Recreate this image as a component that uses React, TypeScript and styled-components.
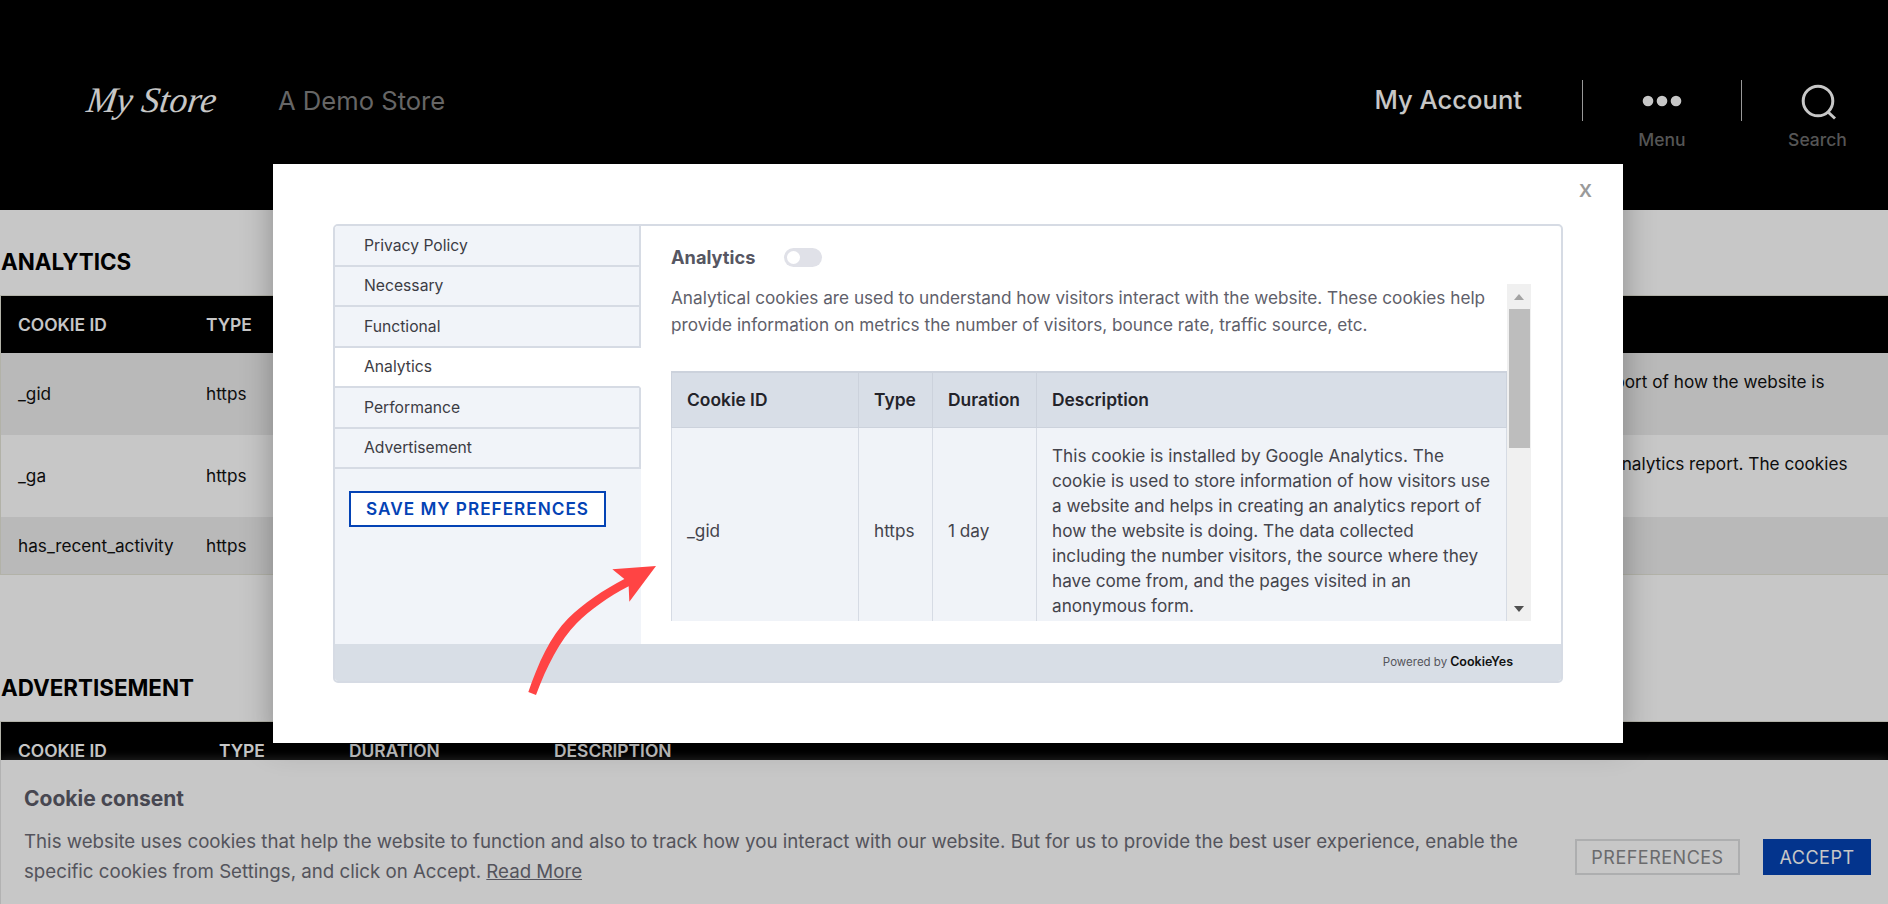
import React from "react";
import styled, { createGlobalStyle } from "styled-components";

const Global = createGlobalStyle`
  html, body { margin: 0; padding: 0; background: #fff; overflow: hidden; }
  body { font-family: Inter, "Liberation Sans", sans-serif; }
  * { box-sizing: border-box; }
`;

const Page = styled.div`
  position: relative;
  width: 1888px;
  height: 904px;
  overflow: hidden;
  background: #fff;
`;

const SiteHeader = styled.header`
  height: 210px;
  background: #000;
  display: flex;
  justify-content: space-between;
  align-items: flex-start;
  padding: 80px 0 0 87px;
`;
const Brand = styled.div`
  display: flex;
  align-items: center;
  height: 41px;
`;
const Logo = styled.div`
  width: 191px;
  font-family: "Liberation Serif", serif;
  font-style: italic;
  font-size: 36px;
  line-height: 41px;
  color: #fff;
  transform: skewX(-8deg);
  transform-origin: left center;
`;
const Tagline = styled.div`
  font-size: 25.6px;
  line-height: 41px;
  color: #838383;
`;
const HeaderRight = styled.div`
  display: flex;
  align-items: flex-start;
`;
const Account = styled.div`
  font-size: 25.6px;
  font-weight: 500;
  line-height: 39px;
  color: #fff;
  margin-right: 60px;
`;
const Separator = styled.div`
  width: 1px;
  height: 41px;
  background: #c4c4c4;
`;
const HeaderAction = styled.div<{ $w: number; $pl?: number }>`
  width: ${(p) => p.$w}px;
  padding-left: ${(p) => p.$pl ?? 0}px;
  display: flex;
  flex-direction: column;
  align-items: center;
`;
const ActionIcon = styled.div`
  height: 41px;
  display: flex;
  align-items: center;
  justify-content: center;
  color: #fff;
`;
const ActionLabel = styled.div`
  margin-top: 9px;
  font-size: 17.5px;
  font-weight: 500;
  line-height: 20px;
  color: #6d6d6d;
`;

const Main = styled.main`
  padding-top: 37px;
`;
const SectionTitle = styled.h2`
  margin: 0 0 18px 1px;
  font-size: 22.4px;
  line-height: 30px;
  font-weight: 700;
  color: #000;
`;
const CookieTable = styled.table<{ $mb?: number }>`
  width: 1888px;
  table-layout: fixed;
  border-collapse: separate;
  border-spacing: 0;
  border: 1px solid #e4e4d8;
  border-right: 0;
  margin-bottom: ${(p) => p.$mb ?? 0}px;
  font-size: 17.2px;
  color: #000;
`;
const HeadCell = styled.th`
  height: 57px;
  padding: 0 0 0 17px;
  background: #000;
  color: #fff;
  font-size: 17.4px;
  font-weight: 600;
  text-align: left;
  text-transform: uppercase;
`;
const Row = styled.tr<{ $odd?: boolean; $h: number }>`
  height: ${(p) => p.$h}px;
  background: ${(p) => (p.$odd ? "#eee" : "#fff")};
`;
const Cell = styled.td`
  padding: 0 17px;
  line-height: 24px;
  vertical-align: middle;
  color: #111;
`;

const Banner = styled.aside`
  position: absolute;
  left: 0;
  right: 0;
  top: 760px;
  height: 144px;
  background: #fff;
  border-left: 1px solid #e4e4e4;
  box-shadow: 0 -1px 10px 0 rgba(172, 171, 171, 0.3);
  display: flex;
  justify-content: space-between;
  padding: 25px 17px 0 23px;
`;
const BannerTitle = styled.div`
  font-size: 21px;
  line-height: 28px;
  font-weight: 700;
  color: #5c5c68;
`;
const BannerCopy = styled.div`
  width: 1510px;
  margin-top: 14px;
  font-size: 18.7px;
  line-height: 30px;
  color: #6c6c76;
`;
const ReadMore = styled.span`
  text-decoration: underline;
`;
const BannerButtons = styled.div`
  display: flex;
  gap: 23px;
  margin-top: 54px;
  align-items: flex-start;
`;
const BannerButton = styled.div<{ $primary?: boolean }>`
  height: 36px;
  width: ${(p) => (p.$primary ? 108 : 165)}px;
  display: flex;
  align-items: center;
  justify-content: center;
  font-size: 18px;
  letter-spacing: 0.5px;
  background: ${(p) => (p.$primary ? "#0443b5" : "transparent")};
  color: ${(p) => (p.$primary ? "#fff" : "#898a8c")};
  border: 2px solid ${(p) => (p.$primary ? "#0443b5" : "#dedfe0")};
`;

const Dim = styled.div`
  position: absolute;
  inset: 0;
  background: rgba(0, 0, 0, 0.22);
`;

const Modal = styled.div`
  position: absolute;
  left: 273px;
  top: 164px;
  width: 1350px;
  height: 579px;
  padding: 60px;
  background: #fff;
  box-shadow: 0 0 30px rgba(0, 0, 0, 0.3);
`;
const Close = styled.div`
  position: absolute;
  right: 31px;
  top: 10px;
  font-size: 24px;
  line-height: 30px;
  font-weight: 500;
  color: #9a9a9a;
`;
const Panel = styled.div`
  height: 459px;
  border: 2px solid #d6dbe4;
  border-radius: 5px;
  overflow: hidden;
  display: flex;
  flex-direction: column;
`;
const PanelBody = styled.div`
  flex: 1;
  display: flex;
  min-height: 0;
`;
const Sidebar = styled.nav`
  width: 306px;
  background: #f1f4f9;
  flex: none;
`;
const Tab = styled.div<{ $active?: boolean }>`
  height: 40.5px;
  display: flex;
  align-items: center;
  padding-left: 29px;
  font-size: 15.7px;
  color: #3c3c44;
  background: ${(p) => (p.$active ? "#fff" : "transparent")};
  border-bottom: 2px solid #d6dbe4;
  border-right: 2px solid ${(p) => (p.$active ? "#fff" : "#d6dbe4")};
`;
const SaveButton = styled.div`
  margin: 22px 0 0 14px;
  width: 257px;
  height: 36px;
  display: flex;
  align-items: center;
  justify-content: center;
  padding-bottom: 1px;
  background: #fff;
  border: 2px solid #0443b5;
  color: #0443b5;
  font-size: 17.2px;
  font-weight: 600;
  letter-spacing: 1px;
`;
const Content = styled.div`
  flex: 1;
  min-width: 0;
  padding: 20px 30px 0 30px;
`;
const ContentHead = styled.div`
  display: flex;
  align-items: center;
  height: 22px;
  margin-bottom: 16px;
`;
const ContentTitle = styled.div`
  width: 113px;
  font-size: 18.2px;
  font-weight: 700;
  color: #565662;
`;
const Toggle = styled.div`
  width: 38px;
  height: 19px;
  border-radius: 10px;
  background: #e0e1e8;
  display: flex;
  align-items: center;
  padding-left: 3px;
`;
const Knob = styled.div`
  width: 13px;
  height: 13px;
  border-radius: 50%;
  background: #fff;
`;
const ScrollArea = styled.div`
  display: flex;
  height: 337px;
`;
const ScrollContent = styled.div`
  flex: 1;
  min-width: 0;
  overflow: hidden;
`;
const Lead = styled.p`
  margin: 0 0 33px;
  font-size: 17.19px;
  line-height: 27px;
  color: #60606a;
`;
const Scrollbar = styled.div`
  width: 24px;
  flex: none;
  background: #f0f0f0;
  display: flex;
  flex-direction: column;
  align-items: center;
`;
const ScrollArrow = styled.div<{ $down?: boolean }>`
  height: 25px;
  width: 100%;
  display: flex;
  align-items: center;
  justify-content: center;
  &::before {
    content: "";
    border-left: 5.5px solid transparent;
    border-right: 5.5px solid transparent;
    ${(p) =>
      p.$down
        ? "border-top: 6px solid #505050;"
        : "border-bottom: 6px solid #a3a3a3;"}
  }
`;
const ScrollThumb = styled.div`
  width: 21px;
  height: 139px;
  background: #bdbdbd;
  margin-bottom: auto;
`;
const PrefTable = styled.table`
  width: 836px;
  table-layout: fixed;
  border-collapse: collapse;
  font-size: 17.2px;
`;
const PrefHead = styled.th`
  height: 55px;
  padding: 0 15px;
  text-align: left;
  font-size: 17.4px;
  font-weight: 600;
  color: #23232a;
  background: #d8dee7;
  border: 1px solid #ccd2dc;
  border-top-width: 2px;
`;
const PrefCell = styled.td`
  padding: 15px 15px 16px;
  line-height: 25px;
  color: #44444c;
  background: #f0f3f8;
  border: 1px solid #d6dbe4;
  vertical-align: middle;
`;
const PanelFooter = styled.div`
  flex: none;
  height: 37px;
  background: #d8dee6;
  display: flex;
  align-items: center;
  justify-content: flex-end;
  gap: 3px;
  padding: 0 48px 2px 0;
  font-size: 11.5px;
  color: #55555c;
`;
const FooterBrand = styled.span`
  font-size: 12.5px;
  font-weight: 600;
  color: #111;
`;
const Arrow = styled.svg`
  position: absolute;
  left: 480px;
  top: 540px;
`;

const gidText =
  "This cookie is installed by Google Analytics. The cookie is used to store information of how visitors use a website and helps in creating an analytics report of how the website is doing. The data collected including the number visitors, the source where they have come from, and the pages visited in an anonymous form.";
const gaText =
  "This cookie is installed by Google Analytics. The cookie is used to calculate visitor, session, campaign data and keep track of site usage for the site's analytics report. The cookies store information anonymously and assign a randomly generated number to identify unique visitors.";

const tabs = ["Privacy Policy", "Necessary", "Functional", "Analytics", "Performance", "Advertisement"];

export default function App() {
  return (
    <Page>
      <Global />
      <SiteHeader>
        <Brand>
          <Logo>My Store</Logo>
          <Tagline>A Demo Store</Tagline>
        </Brand>
        <HeaderRight>
          <Account>My Account</Account>
          <Separator />
          <HeaderAction $w={158}>
            <ActionIcon>
              <svg width="40" height="12" viewBox="0 0 40 12" fill="currentColor">
                <circle cx="6" cy="6" r="5.3" />
                <circle cx="20" cy="6" r="5.3" />
                <circle cx="34" cy="6" r="5.3" />
              </svg>
            </ActionIcon>
            <ActionLabel>Menu</ActionLabel>
          </HeaderAction>
          <Separator />
          <HeaderAction $w={146} $pl={5}>
            <ActionIcon>
              <svg width="40" height="40" viewBox="0 0 40 40" fill="none" stroke="currentColor" strokeWidth="3">
                <circle cx="20" cy="20" r="14.8" />
                <path d="M30 31 L37 37.5" />
              </svg>
            </ActionIcon>
            <ActionLabel>Search</ActionLabel>
          </HeaderAction>
        </HeaderRight>
      </SiteHeader>

      <Main>
        <SectionTitle>ANALYTICS</SectionTitle>
        <CookieTable $mb={98}>
          <colgroup>
            <col width="188" />
            <col width="97" />
            <col width="97" />
            <col />
          </colgroup>
          <thead>
            <tr>
              <HeadCell>Cookie ID</HeadCell>
              <HeadCell>Type</HeadCell>
              <HeadCell>Duration</HeadCell>
              <HeadCell>Description</HeadCell>
            </tr>
          </thead>
          <tbody>
            <Row $odd $h={82}>
              <Cell>_gid</Cell>
              <Cell>https</Cell>
              <Cell>1 day</Cell>
              <Cell>{gidText}</Cell>
            </Row>
            <Row $h={82}>
              <Cell>_ga</Cell>
              <Cell>https</Cell>
              <Cell>2 years</Cell>
              <Cell>{gaText}</Cell>
            </Row>
            <Row $odd $h={57}>
              <Cell>has_recent_activity</Cell>
              <Cell>https</Cell>
              <Cell>1 hour</Cell>
              <Cell>This cookie is used to track recent activity.</Cell>
            </Row>
          </tbody>
        </CookieTable>

        <SectionTitle>ADVERTISEMENT</SectionTitle>
        <CookieTable>
          <colgroup>
            <col width="201" />
            <col width="130" />
            <col width="205" />
            <col />
          </colgroup>
          <thead>
            <tr>
              <HeadCell>Cookie ID</HeadCell>
              <HeadCell>Type</HeadCell>
              <HeadCell>Duration</HeadCell>
              <HeadCell>Description</HeadCell>
            </tr>
          </thead>
        </CookieTable>
      </Main>

      <Banner>
        <div>
          <BannerTitle>Cookie consent</BannerTitle>
          <BannerCopy>
            This website uses cookies that help the website to function and also to track how you interact with our
            website. But for us to provide the best user experience, enable the specific cookies from Settings, and
            click on Accept. <ReadMore>Read More</ReadMore>
          </BannerCopy>
        </div>
        <BannerButtons>
          <BannerButton>PREFERENCES</BannerButton>
          <BannerButton $primary>ACCEPT</BannerButton>
        </BannerButtons>
      </Banner>

      <Dim />

      <Modal>
        <Close>x</Close>
        <Panel>
          <PanelBody>
            <Sidebar>
              {tabs.map((t) => (
                <Tab key={t} $active={t === "Analytics"}>
                  {t}
                </Tab>
              ))}
              <SaveButton>SAVE MY PREFERENCES</SaveButton>
            </Sidebar>
            <Content>
              <ContentHead>
                <ContentTitle>Analytics</ContentTitle>
                <Toggle>
                  <Knob />
                </Toggle>
              </ContentHead>
              <ScrollArea>
                <ScrollContent>
                  <Lead>
                    Analytical cookies are used to understand how visitors interact with the website. These cookies help
                    provide information on metrics the number of visitors, bounce rate, traffic source, etc.
                  </Lead>
                  <PrefTable>
                    <colgroup>
                      <col width="187" />
                      <col width="74" />
                      <col width="104" />
                      <col />
                    </colgroup>
                    <thead>
                      <tr>
                        <PrefHead>Cookie ID</PrefHead>
                        <PrefHead>Type</PrefHead>
                        <PrefHead>Duration</PrefHead>
                        <PrefHead>Description</PrefHead>
                      </tr>
                    </thead>
                    <tbody>
                      <tr>
                        <PrefCell>_gid</PrefCell>
                        <PrefCell>https</PrefCell>
                        <PrefCell>1 day</PrefCell>
                        <PrefCell>{gidText}</PrefCell>
                      </tr>
                    </tbody>
                  </PrefTable>
                </ScrollContent>
                <Scrollbar>
                  <ScrollArrow />
                  <ScrollThumb />
                  <ScrollArrow $down />
                </Scrollbar>
              </ScrollArea>
            </Content>
          </PanelBody>
          <PanelFooter>
            Powered by <FooterBrand>CookieYes</FooterBrand>
          </PanelFooter>
        </Panel>
      </Modal>

      <Arrow width="220" height="180" viewBox="0 0 660 540">
        <path
          fill="#ff4444"
          d="M145 456 C175 370 210 290 265 235 C310 190 370 150 433 117 L397 88 L528 78 L448 185 L446 139 C385 170 330 210 290 250 C240 300 200 380 168 465 Z"
        />
      </Arrow>
    </Page>
  );
}
